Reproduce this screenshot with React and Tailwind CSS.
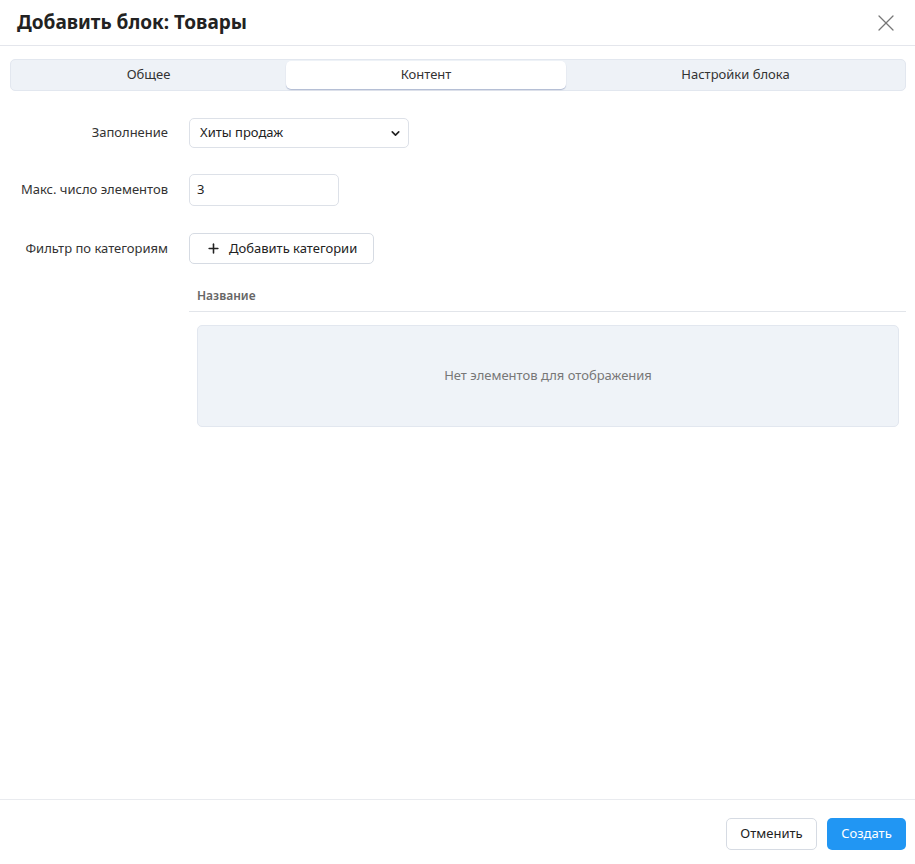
import { X, Plus, ChevronDown } from 'lucide-react';

const TABS = [
  { label: 'Общее', w: 'w-[275px]' },
  { label: 'Контент', w: 'w-[280px]' },
  { label: 'Настройки блока', w: 'flex-1' },
];

export default function App() {
  return (
    <div className="h-[864px] w-[915px] bg-white flex flex-col text-[13px] text-[#333]" style={{ fontFamily: '"Noto Sans", "Open Sans", sans-serif' }}>
      <div className="h-[46px] shrink-0 flex items-center justify-between pl-[17px] pr-[15px] border-b border-[#e4e6ec]">
        <h1 className="text-[19px] font-bold text-[#222]">Добавить блок: Товары</h1>
        <X className="w-[28px] h-[28px] text-[#777]" strokeWidth={1.1} />
      </div>

      <div className="flex-1 pl-[10px] pr-[9px] pt-[13px]">
        <div className="flex h-[32px] bg-[#eef2f7] border border-[#e2e7ef] rounded-[5px] py-px">
          {TABS.map((t, i) => (
            <div key={t.label} className={`${t.w} flex items-center justify-center rounded-[5px] text-[#333] ${i === 1 ? 'bg-white shadow-[0_1px_1px_rgba(60,80,140,0.35)]' : ''}`}>
              {t.label}
            </div>
          ))}
        </div>

        <div className="mt-[27px] flex flex-col">
          <div className="flex items-center">
            <label className="w-[158px] text-right">Заполнение</label>
            <div className="ml-[21px] w-[220px] h-[30px] border border-[#dde1e8] rounded-[5px] flex items-center justify-between pl-[10px] pr-[6px] text-[#222]">
              <span>Хиты продаж</span>
              <ChevronDown className="w-[13px] h-[13px] text-[#222]" strokeWidth={3} />
            </div>
          </div>

          <div className="flex items-center mt-[26px]">
            <label className="w-[158px] text-right">Макс. число элементов</label>
            <div className="ml-[21px] w-[150px] h-[32px] border border-[#dde1e8] rounded-[5px] flex items-center pl-[7px] text-[#222]">3</div>
          </div>

          <div className="flex items-start mt-[27px]">
            <label className="w-[158px] text-right pt-[6px]">Фильтр по категориям</label>
            <div className="ml-[21px] flex-1 flex flex-col">
              <button className="self-start h-[31px] px-[16px] border border-[#d6dbe3] rounded-[5px] flex items-center gap-[8px] text-[#222] bg-white">
                <Plus className="w-[15px] h-[15px]" strokeWidth={2.5} />
                Добавить категории
              </button>
              <div className="mt-[17px] h-[31px] border-b border-[#e2e5ea] flex items-center pl-[8px] text-[12px] font-semibold text-[#666]">
                Название
              </div>
              <div className="mt-[13px] ml-[8px] mr-[7px] h-[102px] bg-[#eff3f8] border border-[#e2e7ef] rounded-[5px] flex items-center justify-center text-[#777]">
                Нет элементов для отображения
              </div>
            </div>
          </div>
        </div>
      </div>

      <div className="h-[65px] shrink-0 border-t border-[#e9ebef] flex items-center justify-end gap-[10px] pr-[9px] pt-[3px]">
        <button className="h-[32px] w-[91px] border border-[#d6dbe3] rounded-[5px] text-[#222] bg-white">Отменить</button>
        <button className="h-[32px] w-[79px] rounded-[5px] text-white bg-[#2196f3]">Создать</button>
      </div>
    </div>
  );
}
